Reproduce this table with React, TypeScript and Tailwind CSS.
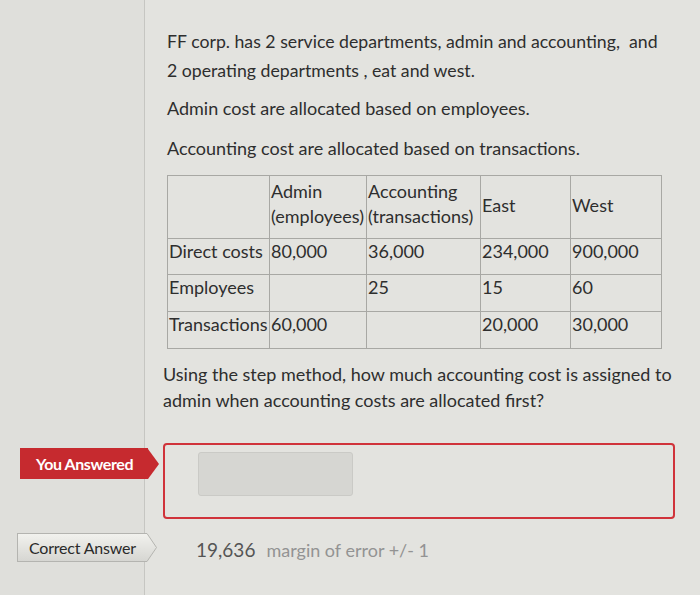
import React from "react";

const base = "border border-[#a8a8a4] px-[1px] whitespace-nowrap";
const cell = `${base} align-top`;

export default function App() {
  return (
    <div
      className="w-[700px] h-[595px] overflow-hidden bg-[#e3e3df] flex text-[#2e2e2e]"
      style={{ fontFamily: "Lato, 'Open Sans', sans-serif" }}
    >
      <div className="w-[145px] shrink-0 bg-[#dfdfdb] border-r border-[#c6c6c2] flex flex-col overflow-visible">
        <div className="h-[448px]" />
        <div className="flex items-center ml-[20px] relative z-10">
          <div className="h-[31px] w-[128px] shrink-0 bg-[#c62a2f] text-white text-[16px] font-bold flex items-center pl-[16px] tracking-[-0.4px]">
            You Answered
          </div>
          <div className="w-0 h-0 shrink-0 border-y-[15.5px] border-y-transparent border-l-[11px] border-l-[#c62a2f]" />
        </div>
        <div className="h-[54px]" />
        <div className="flex items-center ml-[17px] relative z-10">
          <div className="h-[29px] w-[130px] shrink-0 bg-gradient-to-b from-[#f2f2ee] to-[#d6d6d2] border border-[#b4b4b0] border-r-0 text-[#2a2a2a] text-[16px] flex items-center pl-[11px] tracking-[-0.2px]">
            Correct Answer
          </div>
          <svg width="12" height="29" viewBox="0 0 12 29" className="-ml-[1px] shrink-0">
            <defs>
              <linearGradient id="g" x1="0" y1="0" x2="0" y2="1">
                <stop offset="0" stopColor="#f2f2ee" />
                <stop offset="1" stopColor="#d6d6d2" />
              </linearGradient>
            </defs>
            <path d="M0 0.5 H1 L10.5 14.5 L1 28.5 H0" fill="url(#g)" stroke="#b4b4b0" strokeWidth="1" />
          </svg>
        </div>
      </div>
      <div className="flex-1 flex flex-col pl-[22px]">
        <div className="pt-[27px] text-[17.7px] leading-[29px] whitespace-nowrap">
          FF corp. has 2 service departments, admin and accounting,&nbsp; and
          <br />2 operating departments , eat and west.
        </div>
        <div className="mt-[9px] text-[18px] leading-[29px]">
          Admin cost are allocated based on employees.
        </div>
        <div className="mt-[11px] text-[18px] leading-[29px]">
          Accounting cost are allocated based on transactions.
        </div>
        <table className="mt-[12px] w-[495px] border-collapse border border-[#a8a8a4] text-[18px] leading-[25px]">
          <tbody>
            <tr className="h-[63px]">
              <td className={`${cell} w-[102px]`}></td>
              <td className={`${cell} w-[97px] pt-[3px]`}>
                <div>Admin</div>
                <div>(employees)</div>
              </td>
              <td className={`${cell} w-[114px] pt-[3px]`}>
                <div>Accounting</div>
                <div>(transactions)</div>
              </td>
              <td className={`${base} w-[90px] align-middle pb-[4px]`}>East</td>
              <td className={`${base} align-middle pb-[4px]`}>West</td>
            </tr>
            <tr className="h-[36px]">
              <td className={cell}>Direct costs</td>
              <td className={cell}>80,000</td>
              <td className={cell}>36,000</td>
              <td className={cell}>234,000</td>
              <td className={cell}>900,000</td>
            </tr>
            <tr className="h-[37px]">
              <td className={cell}>Employees</td>
              <td className={cell}></td>
              <td className={cell}>25</td>
              <td className={cell}>15</td>
              <td className={cell}>60</td>
            </tr>
            <tr className="h-[37px]">
              <td className={cell}>Transactions</td>
              <td className={cell}>60,000</td>
              <td className={cell}></td>
              <td className={cell}>20,000</td>
              <td className={cell}>30,000</td>
            </tr>
          </tbody>
        </table>
        <div className="mt-[12px] -ml-[4px] text-[18px] leading-[26px] whitespace-nowrap">
          Using the step method, how much accounting cost is assigned to
          <br />
          admin when accounting costs are allocated first?
        </div>
        <div className="mt-[30px] -ml-[4px] w-[512px] h-[76px] border-2 border-[#d0333a] rounded-[4px] flex items-start pl-[33px] pt-[7px]">
          <div className="w-[155px] h-[44px] bg-[#d6d6d2] border border-[#cacac6] rounded-[3px]" />
        </div>
        <div className="mt-[18px] ml-[29px] flex items-center h-[26px]">
          <span className="text-[#555] text-[19px]">19,636</span>
          <span className="ml-[11px] text-[#939393] text-[18px]">margin of error +/- 1</span>
        </div>
      </div>
    </div>
  );
}
